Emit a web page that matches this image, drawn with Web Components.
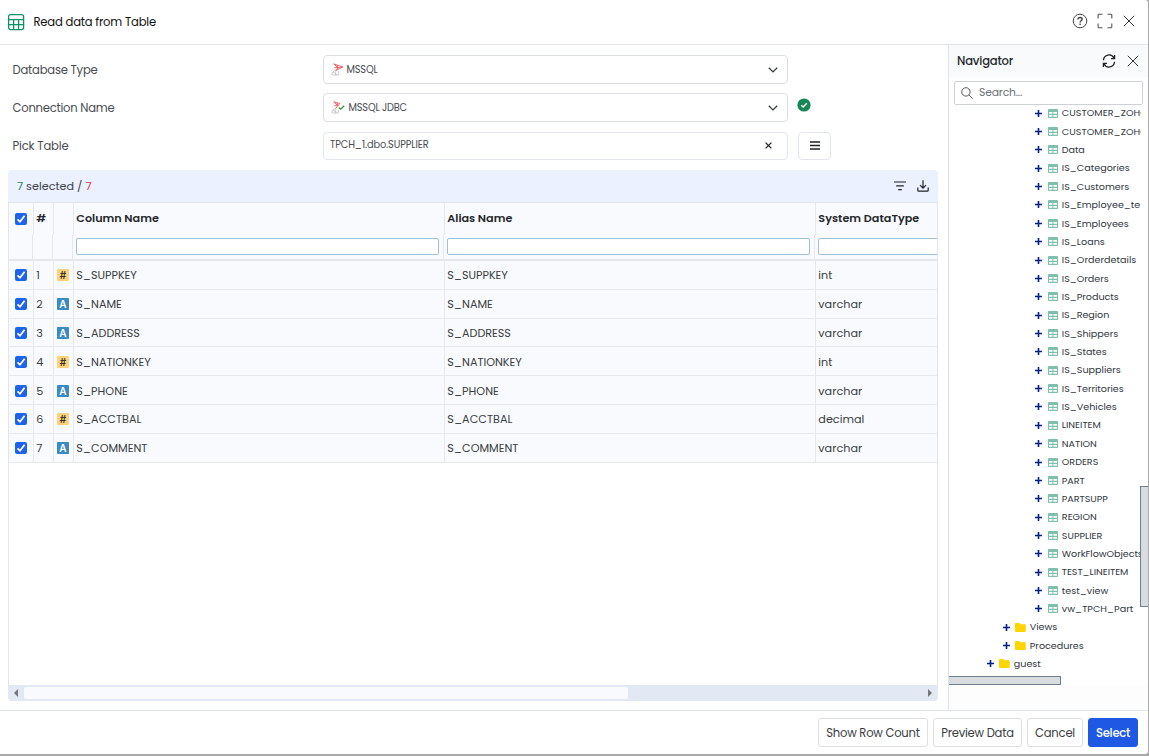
<!DOCTYPE html>
<html lang="en">
<head>
<meta charset="utf-8">
<title>Read data from Table</title>
<style>
html, body {
    margin: 0;
    height: 100%;
    overflow: hidden;
}
body {
    font-family: Poppins, Inter, "Open Sans", sans-serif;
    font-feature-settings: "cv11";
    font-size: 11.6px;
    color: #3a3e42;
    background: #a9a9a9;
}
</style>
</head>
<body>
<read-dialog></read-dialog>

<script>
const makeTemplate = html => {
    const template = document.createElement('template');
    template.innerHTML = html;
    return template;
};

// one line of text, tracked so that it fills its w attribute
const templateFitText = makeTemplate(`
<style>
:host {
    display: block;
    flex: none;
    white-space: nowrap;
    line-height: 18px;
}
</style>
<span><slot></slot></span>
`);

class FitText extends HTMLElement {

    constructor() {
        super();
        this.attachShadow({mode: 'open'});
        this.shadowRoot.appendChild(templateFitText.content.cloneNode(true));
    }

    connectedCallback() {
        const span = this.shadowRoot.querySelector('span');
        const width = Number(this.getAttribute('w'));
        if (!width) return;
        const natural = span.getBoundingClientRect().width;
        span.style.letterSpacing = ((width - natural) / this.textContent.length) + 'px';
    }
}

const icons = {
    table: `<svg width="18" height="18" viewBox="0 0 18 18" fill="none" stroke="#0b9168" stroke-width="1.3"><rect x="1.6" y="1.6" width="15" height="15" rx="2"/><path d="M1.6 6.6h15M1.6 11.6h15M6.6 6.6v10M11.6 6.6v10"/></svg>`,
    help: `<svg width="16" height="16" viewBox="0 0 16 16" fill="none" stroke="#444" stroke-width="1"><circle cx="8" cy="8" r="6.8"/><path stroke-width="1.4" d="M6 6.5c0-2.7 4.1-2.5 4.1-.2 0 1.5-2 1.5-2 3.1M8.1 10.6v1.3"/></svg>`,
    expand: `<svg width="16" height="16" viewBox="0 0 16 16" fill="none" stroke="#555" stroke-width="1.1"><path d="M1.1 5.5V2q0-.8.8-.8h3.6M10.5 1.2H14q.8 0 .8.8v3.5M14.8 10.5V14q0 .8-.8.8h-3.5M5.5 14.8H2q-.9 0-.9-.8v-3.5"/></svg>`,
    close: `<svg width="12" height="12" viewBox="0 0 12 12" fill="none" stroke="#333" stroke-width="1"><path d="M.8.8l10.4 10.4M11.2.8L.8 11.2"/></svg>`,
    refresh: `<svg width="14" height="14" viewBox="0 0 14 14" fill="none" stroke="#222" stroke-width="1.3"><path d="M1.5 6.2A5.5 5.5 0 0 1 12 4.2M12.6 1v3.6H9M12.5 7.8A5.5 5.5 0 0 1 2 9.8M1.4 13V9.4H5"/></svg>`,
    search: `<svg width="12" height="12" viewBox="0 0 12 12" fill="none" stroke="#555" stroke-width="1"><circle cx="4.9" cy="4.9" r="4.2"/><path d="M8 8l3.5 3.5"/></svg>`,
    chevron: `<svg width="10" height="6" viewBox="0 0 10 6" fill="none" stroke="#343a40" stroke-width="1.3"><path d="M.8.8L5 4.9 9.2.8"/></svg>`,
    clear: `<svg width="7" height="7" viewBox="0 0 7 7" fill="none" stroke="#222" stroke-width="1.3"><path d="M.6.6l5.8 5.8M6.4.6L.6 6.4"/></svg>`,
    menu: `<svg width="10" height="9" viewBox="0 0 10 9" stroke="#222" stroke-width="1.3"><path d="M0 1h10M0 4.5h10M0 8h10"/></svg>`,
    ok: `<svg width="14" height="14" viewBox="0 0 14 14" fill="none"><circle cx="7" cy="7" r="6.6" fill="#198754"/><path d="M4.3 7.2l1.9 1.8 3.6-3.8" stroke="#fff" stroke-width="1.4"/></svg>`,
    filter: `<svg width="12" height="10" viewBox="0 0 12 10" stroke="#222" stroke-width="1.2"><path d="M0 1h12M2.2 4.9h7.6M4.2 8.7h3.6"/></svg>`,
    download: `<svg width="12" height="12" viewBox="0 0 12 12" fill="none" stroke="#222" stroke-width="1.2"><path d="M.8 7.6v2.6q0 1 1 1h8.4q1 0 1-1V7.6M6 .3v7.6M3 5.1l3 3 3-3"/></svg>`,
    mssql: `<svg width="13" height="13" viewBox="0 0 13 13" fill="none"><path d="M2.4.8l3.4 1.1 6 2.1-3.3 1.6-4 2M3.2 1.2l3.6 3.6M6 1.9l.9 2.7 4.7-.6M3.4 4.6l3.8.2-2.4 2.8" stroke="#f0555c" stroke-width=".9"/><path d="M4.5 7L1.6 9.2.7 11.6l3.6.7 3.6-.5-.5-3.6M2 9.2l4.2 2.5M4.8 7.6L4.3 12" stroke="#bfc3c5" stroke-width=".8"/></svg>`,
    mssqlOk: `<svg width="14" height="13" viewBox="0 0 14 13" fill="none"><path d="M2.4.8l6.4 1.7-4.3 5.1M3.2 1.2l3.6 3.6M6 1.9l.9 2.7M3.4 4.6l3.8.2" stroke="#f0555c" stroke-width=".9"/><path d="M4.5 7L1.6 9.2.7 11.6l3.6.7 3.4-.5-.5-3.2M2 9.2l4.2 2.5M4.8 7.6L4.3 12" stroke="#bfc3c5" stroke-width=".8"/><path d="M7.7 6.5l2 1.7 3.5-3.5" stroke="#2c9a35" stroke-width="1.3"/></svg>`,
    left: `<svg width="4" height="8" viewBox="0 0 4 8" fill="#777"><path d="M4 0v8L0 4z"/></svg>`,
    right: `<svg width="4" height="8" viewBox="0 0 4 8" fill="#777"><path d="M0 0v8l4-4z"/></svg>`,
    plus: `<svg width="7" height="7" viewBox="0 0 7 7" stroke="#00218a" stroke-width="1.6"><path d="M0 3.5h7M3.5 0v7"/></svg>`,
    grid: `<svg width="10" height="9" viewBox="0 0 10 9"><rect width="10" height="9" rx=".8" fill="#7fc0ad"/><path fill="#fff" d="M1 2.9h3.4v1.9H1zM5.4 2.9H9v1.9H5.4zM1 5.9h3.4v1.9H1zM5.4 5.9H9v1.9H5.4z"/></svg>`,
    folder: `<svg width="11" height="9" viewBox="0 0 11 9"><path fill="#ffd500" d="M.8 0h3.4l1.3 1.3h4.4q.9 0 .9.9v5.9q0 .9-.9.9H.9Q0 9 0 8.1V.8Q0 0 .8 0z"/></svg>`
};

class UiIcon extends HTMLElement {

    constructor() {
        super();
        this.attachShadow({mode: 'open'});
    }

    connectedCallback() {
        this.shadowRoot.innerHTML = `
<style>
:host { display: block; flex: none; line-height: 0; }
svg { display: block; }
</style>
${icons[this.getAttribute('name')]}`;
    }
}

const templateCheckBox = makeTemplate(`
<style>
:host {
    display: block;
    flex: none;
    width: 12px;
    height: 12px;
    border-radius: 2px;
    background: #1f63ec;
}
svg { display: block; }
</style>
<svg width="12" height="12" viewBox="0 0 12 12" fill="none" stroke="#fff" stroke-width="1.7"><path d="M2.5 6.3l2.5 2.5 4.6-6"/></svg>
`);

class CheckBox extends HTMLElement {

    constructor() {
        super();
        this.attachShadow({mode: 'open'});
        this.shadowRoot.appendChild(templateCheckBox.content.cloneNode(true));
    }
}

const templateDialogButton = makeTemplate(`
<style>
:host {
    display: flex;
    align-items: center;
    justify-content: center;
    box-sizing: border-box;
    height: 29px;
    border: 1px solid #dcdfe3;
    border-radius: 3px;
    background: #fff;
    color: #3c4043;
}
:host([primary]) {
    border-color: #1f59e3;
    background: #1f59e3;
    color: #fff;
    font-weight: 500;
}
</style>
<slot></slot>
`);

class DialogButton extends HTMLElement {

    constructor() {
        super();
        this.attachShadow({mode: 'open'});
        this.shadowRoot.appendChild(templateDialogButton.content.cloneNode(true));
    }
}

const templateFormRow = makeTemplate(`
<style>
:host {
    display: grid;
    grid-template-columns: 310.5px 465px auto;
    align-items: center;
    column-gap: 0;
    height: 29px;
    padding-left: 12.5px;
    color: #4a4c50;
}
.box {
    display: flex;
    align-items: center;
    box-sizing: border-box;
    height: 29px;
    padding: 0 9px 0 7px;
    border: 1px solid #dcdfe6;
    border-radius: 4px;
    font-size: 9.8px;
    background: #fff;
}
:host([plain]) .box { height: 28px; padding: 0 15px 2px 6px; border-color: #e0e6f1; }
.tail { margin-left: auto; }
</style>
<slot name="label"></slot>
<div class="box"><slot></slot><div class="tail"><slot name="tail"></slot></div></div>
<slot name="after"></slot>
`);

class FormRow extends HTMLElement {

    constructor() {
        super();
        this.attachShadow({mode: 'open'});
        this.shadowRoot.appendChild(templateFormRow.content.cloneNode(true));
    }
}

const columns = [
    ['S_SUPPKEY', 60.5, 'int', 14],
    ['S_NAME', 45.5, 'varchar', 44],
    ['S_ADDRESS', 63.5, 'varchar', 44],
    ['S_NATIONKEY', 74.5, 'int', 14],
    ['S_PHONE', 51.5, 'varchar', 44],
    ['S_ACCTBAL', 65, 'decimal', 46],
    ['S_COMMENT', 71, 'varchar', 44]
];

class ColumnGrid extends HTMLElement {

    constructor() {
        super();
        this.attachShadow({mode: 'open'});
    }

    connectedCallback() {
        this.shadowRoot.innerHTML = `
<style>
:host {
    display: flex;
    flex-direction: column;
    width: 930px;
    height: 531px;
    box-sizing: border-box;
    overflow: hidden;
    border-radius: 4px;
    font-size: 11.2px;
}
.bar {
    display: flex;
    align-items: center;
    flex: none;
    height: 32px;
    box-sizing: border-box;
    padding: 0 9.5px 0 9px;
    background: #ebf1ff;
    color: #3c4148;
}
.bar .tools { display: flex; align-items: center; gap: 11px; margin-left: auto; }
.green { color: #198754; }
.red { color: #dc3545; }
.body {
    flex: 1;
    overflow: hidden;
    border: 1px solid #e2e5ea;
    border-bottom: 0;
    background: #fff;
}
.row {
    display: grid;
    grid-template-columns: 25px 20px 20px 371px 371px 240px;
    width: 1047px;
    box-sizing: border-box;
    background: #f9fafd;
}
.cell {
    display: flex;
    align-items: center;
    box-sizing: border-box;
    border-right: 1px solid #e6e8eb;
    padding: 1px 0 0 2.3px;
}
.cell.check { padding: 1px 0 0 6px; }
.cell.type { padding: 1px 0 0 3px; }
.head { height: 32px; font-weight: 600; color: #24272b; }
.head .cell { padding-bottom: 4px; }
.head .cell.check { padding: 0 0 1px 6px; }
.filters { height: 26px; border-bottom: 2px solid #e4e6ea; }
.filters .cell { position: relative; left: -1px; padding: 0 4px 2px 3px; }
.field {
    flex: 1;
    height: 17px;
    box-sizing: border-box;
    border: 1px solid #9fbfdb;
    border-radius: 2px;
    background: #fff;
}
.data { height: 28.8px; border-bottom: 1px solid #e6e8eb; }
.badge {
    width: 12px;
    height: 12px;
    border-radius: 1px;
    background: #3b8ac4;
    color: #fff;
    font: 600 10px/12px Inter, sans-serif;
    text-align: center;
}
.badge.num { background: #ffd37a; color: #333; }
.scroll {
    display: flex;
    align-items: center;
    flex: none;
    height: 16px;
    box-sizing: border-box;
    padding: 0 6px;
    background: #e2e9f5;
}
.thumb { width: 604px; height: 12px; margin: 0 auto 0 6px; border-radius: 2px; background: #f8fafd; }
</style>
<div class="bar">
    <fit-text w="74.5"><span class="green">7</span> selected / <span class="red">7</span></fit-text>
    <div class="tools"><ui-icon name="filter"></ui-icon><ui-icon name="download"></ui-icon></div>
</div>
<div class="body">
    <div class="row head">
        <div class="cell check"><check-box></check-box></div>
        <div class="cell"><fit-text w="9">#</fit-text></div>
        <div class="cell"></div>
        <div class="cell"><fit-text w="82.5">Column Name</fit-text></div>
        <div class="cell"><fit-text w="65">Alias Name</fit-text></div>
        <div class="cell"><fit-text w="101">System DataType</fit-text></div>
    </div>
    <div class="row filters">
        <div class="cell"></div><div class="cell"></div><div class="cell"></div>
        ${'<div class="cell"><div class="field"></div></div>'.repeat(3)}
    </div>
    ${columns.map(([name, nameWidth, type, typeWidth], i) => `
    <div class="row data">
        <div class="cell check"><check-box></check-box></div>
        <div class="cell"><fit-text>${i + 1}</fit-text></div>
        <div class="cell type"><div class="badge ${type === 'varchar' ? '' : 'num'}">${type === 'varchar' ? 'A' : '#'}</div></div>
        <div class="cell"><fit-text w="${nameWidth}">${name}</fit-text></div>
        <div class="cell"><fit-text w="${nameWidth}">${name}</fit-text></div>
        <div class="cell"><fit-text w="${typeWidth}">${type}</fit-text></div>
    </div>`).join('')}
</div>
<div class="scroll"><ui-icon name="left"></ui-icon><div class="thumb"></div><ui-icon name="right"></ui-icon></div>`;
    }
}

// name, text width, icon, indent of the plus sign
const treeItems = [
    ['CUSTOMER_ZOHO', 86], ['CUSTOMER_ZOHO', 86], ['Data', 23],
    ['IS_Categories', 68], ['IS_Customers', 67.5], ['IS_Employee_te', 78.5],
    ['IS_Employees', 67], ['IS_Loans', 43], ['IS_Orderdetails', 74.5],
    ['IS_Orders', 47], ['IS_Products', 57], ['IS_Region', 47.5],
    ['IS_Shippers', 56.5], ['IS_States', 45], ['IS_Suppliers', 59],
    ['IS_Territories', 62], ['IS_Vehicles', 55], ['LINEITEM', 39],
    ['NATION', 35], ['ORDERS', 36.5], ['PART', 23], ['PARTSUPP', 46],
    ['REGION', 35], ['SUPPLIER', 40.5], ['WorkFlowObjects', 81],
    ['TEST_LINEITEM', 66.5], ['test_view', 46.5], ['vw_TPCH_Part', 71.5],
    ['Views', 27.5, 'folder', 54], ['Procedures', 54, 'folder', 54],
    ['guest', 27, 'folder', 38]
];

class NavigatorPanel extends HTMLElement {

    constructor() {
        super();
        this.attachShadow({mode: 'open'});
    }

    connectedCallback() {
        this.shadowRoot.innerHTML = `
<style>
:host {
    display: flex;
    flex-direction: column;
    position: relative;
    width: 200px;
    box-sizing: border-box;
    border-left: 1px solid #e0e3e7;
    background: #fdfdfd;
}
header {
    display: flex;
    align-items: center;
    gap: 11px;
    flex: none;
    height: 32px;
    padding: 0 9.5px 0 8px;
    background: #f8fafc;
    font-weight: 500;
    color: #26292d;
}
header fit-text { margin-right: auto; }
.search {
    display: flex;
    align-items: center;
    gap: 6px;
    flex: none;
    height: 24px;
    box-sizing: border-box;
    margin: 0 5px;
    padding: 0 6px 1px;
    border: 1px solid #ced2d6;
    border-radius: 2px;
    background: #fff;
    font-size: 10.8px;
    color: #6c7378;
}
.tree {
    height: 571px;
    width: 192px;
    overflow: hidden;
    font-size: 9.6px;
    color: #31393f;
}
.item { display: flex; align-items: center; height: 18.37px; }
.item:first-child { margin-top: -1px; }
.item ui-icon[name=plus] { margin-right: 6px; }
.item ui-icon[name=folder] { margin-left: -1px; }
.item fit-text { margin: 0.4px 0 0 3.8px; }
.hthumb {
    width: 112px;
    height: 9px;
    box-sizing: border-box;
    border: 1px solid #708090;
    border-left: 0;
    background: #d9dcdf;
}
/* floats over the right end of the tree */
.vthumb {
    position: absolute;
    left: 191px;
    top: 441px;
    width: 8px;
    height: 121px;
    box-sizing: border-box;
    border: 1px solid #708090;
    border-right: 0;
    background: #d9dcdf;
}
.content { padding-top: 4px; background: #fff; }
</style>
<header><fit-text w="56">Navigator</fit-text><ui-icon name="refresh"></ui-icon><ui-icon name="close"></ui-icon></header>
<div class="content">
    <div class="search"><ui-icon name="search"></ui-icon><fit-text w="43">Search...</fit-text></div>
    <div class="tree">
    ${treeItems.map(([name, width, icon = 'grid', indent = 86]) => `
        <div class="item" style="padding-left: ${indent}px"><ui-icon name="plus"></ui-icon><ui-icon name="${icon}"></ui-icon><fit-text w="${width}">${name}</fit-text></div>`).join('')}
    </div>
    <div class="hthumb"></div>
</div>
<div class="vthumb"></div>`;
    }
}

const templateReadDialog = makeTemplate(`
<style>
:host {
    display: flex;
    flex-direction: column;
    width: 1148px;
    height: 754px;
    overflow: hidden;
    border-radius: 0 3px 3px 0;
    background: #fff;
}
.title {
    display: flex;
    align-items: center;
    flex: none;
    box-sizing: border-box;
    height: 45px;
    padding: 0 13.5px 2px 7px;
    border-bottom: 1px solid #e3e5e8;
    color: #111;
}
.title ui-icon[name=table] { margin-top: 1px; }
.title fit-text { margin: 1px auto 0 8.5px; }
.title ui-icon[name=expand] { margin: 0 10px 0 8.5px; }
.main { display: flex; flex: none; height: 665px; }
.left { flex: 1; min-width: 0; }
.form { display: flex; flex-direction: column; gap: 9.3px; box-sizing: border-box; padding-top: 10px; height: 125px; }
column-grid { margin-left: 8px; }
.menu {
    display: flex;
    align-items: center;
    justify-content: center;
    box-sizing: border-box;
    width: 33px;
    height: 28px;
    margin-left: 10px;
    padding-bottom: 2px;
    border: 1px solid #e0e6f1;
    border-radius: 4px;
}
.ok { margin: -5px 0 0 9px; }
.footer {
    display: flex;
    flex: 1;
    align-items: flex-start;
    justify-content: flex-end;
    gap: 5px;
    padding: 7px 10px 0 0;
    border-top: 1px solid #dfe5ef;
}
</style>
<div class="title">
    <ui-icon name="table"></ui-icon>
    <fit-text w="122.5">Read data from Table</fit-text>
    <ui-icon name="help"></ui-icon>
    <ui-icon name="expand"></ui-icon>
    <ui-icon name="close"></ui-icon>
</div>
<div class="main">
    <div class="left">
        <div class="form">
            <form-row>
                <fit-text slot="label" w="85">Database Type</fit-text>
                <ui-icon name="mssql"></ui-icon><fit-text w="31" style="margin-left: 2.5px">MSSQL</fit-text>
                <ui-icon slot="tail" name="chevron"></ui-icon>
            </form-row>
            <form-row>
                <fit-text slot="label" w="102">Connection Name</fit-text>
                <ui-icon name="mssqlOk"></ui-icon><fit-text w="58.5" style="margin-left: 3.5px">MSSQL JDBC</fit-text>
                <ui-icon slot="tail" name="chevron"></ui-icon>
                <ui-icon slot="after" class="ok" name="ok"></ui-icon>
            </form-row>
            <form-row plain>
                <fit-text slot="label" w="56">Pick Table</fit-text>
                <fit-text w="98.5">TPCH_1.dbo.SUPPLIER</fit-text>
                <ui-icon slot="tail" name="clear"></ui-icon>
                <div slot="after" class="menu"><ui-icon name="menu"></ui-icon></div>
            </form-row>
        </div>
        <column-grid></column-grid>
    </div>
    <navigator-panel></navigator-panel>
</div>
<div class="footer">
    <dialog-button style="width: 110px"><fit-text w="93.5">Show Row Count</fit-text></dialog-button>
    <dialog-button style="width: 89px"><fit-text w="72.5">Preview Data</fit-text></dialog-button>
    <dialog-button style="width: 56px"><fit-text w="40">Cancel</fit-text></dialog-button>
    <dialog-button primary style="width: 50px"><fit-text w="34">Select</fit-text></dialog-button>
</div>
`);

class ReadDialog extends HTMLElement {

    constructor() {
        super();
        this.attachShadow({mode: 'open'});
        this.shadowRoot.appendChild(templateReadDialog.content.cloneNode(true));
    }
}

customElements.define('read-dialog', ReadDialog);
customElements.define('form-row', FormRow);
customElements.define('column-grid', ColumnGrid);
customElements.define('navigator-panel', NavigatorPanel);
customElements.define('dialog-button', DialogButton);
customElements.define('check-box', CheckBox);
customElements.define('ui-icon', UiIcon);
// last, since it measures text that the elements above have already styled
customElements.define('fit-text', FitText);
</script>
</body>
</html>
